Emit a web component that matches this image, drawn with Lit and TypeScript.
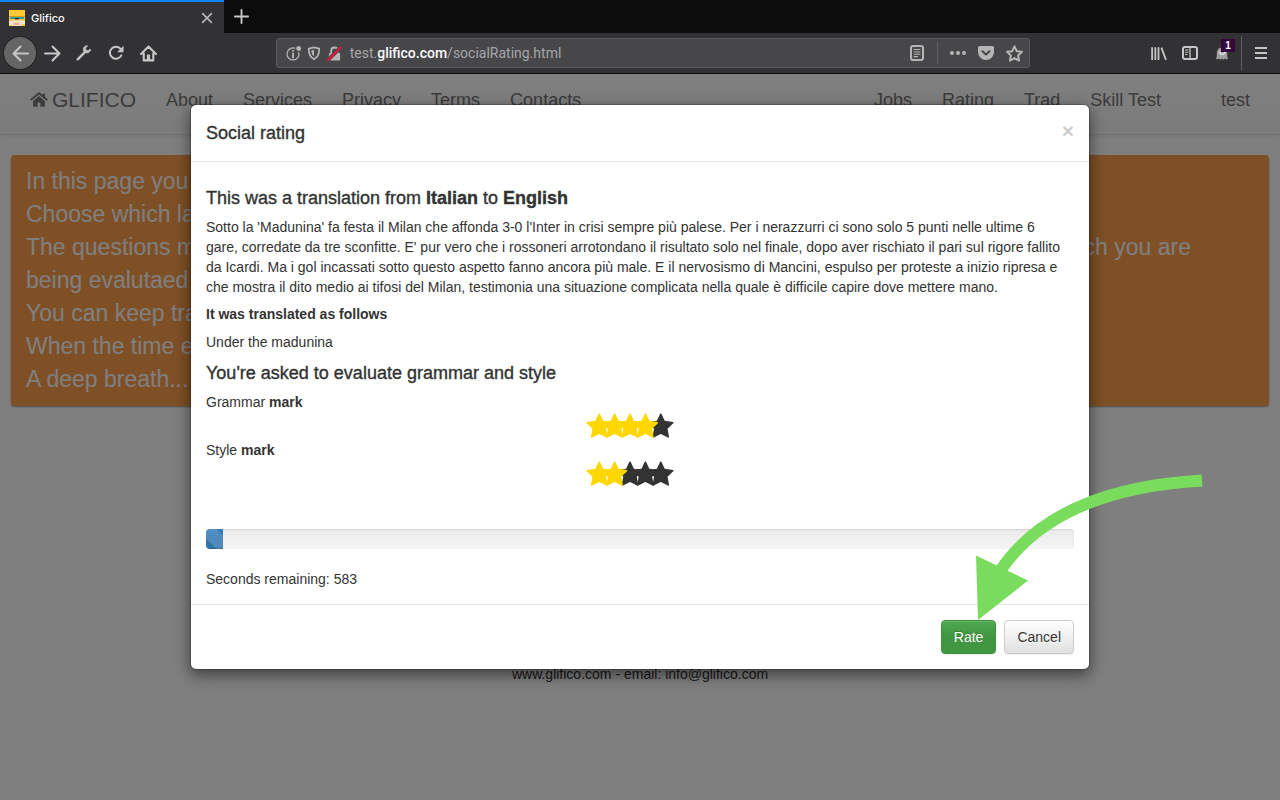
import { LitElement, html, css, svg } from "lit";
import { customElement, property, state } from "lit/decorators.js";

const icon = (size: number, body: unknown) => html`<svg
  width=${size} height=${size} viewBox="0 0 16 16" fill="none" stroke="currentColor"
  stroke-width="2" stroke-linecap="round" stroke-linejoin="round" aria-hidden="true">${body}</svg>`;

const icons = {
  back: svg`<path d="M15 8H1.5M8 1.5 1.5 8 8 14.5"/>`,
  forward: svg`<path d="M1 8h13.5M8 1.5 14.5 8 8 14.5"/>`,
  wrench: svg`<path d="M1.7 14.3 8.4 7.6" stroke-width="2.4"/><path d="M10.2 1.3C7.3 2 6.6 5.3 8 7.1c1.400 2 5.300 2.300 6.700-1.400L14.300 4.700 12 6.300 9.900 5.700 9.600 3.600 11.500 1.700Z" transform="translate(0 -.6)" fill="currentColor" stroke-width=".6"/>`,
  reload: svg`<path d="M13.300 10.400A6 6 0 1 1 12.700 4.100"/><path d="M15.500.8v6.400H9.200Z" fill="currentColor" stroke="none"/>`,
  home: svg`<path d="M1 8.500 8 1.500l7 7M3.500 8v6.500h9V8"/><path d="M6.500 9h3v5.500h-3z" fill="currentColor" stroke="none"/>`,
  library: svg`<path d="M2 2v12M5 2v12M8 2v12M10.700 2.500 15 14" stroke-width="1.700" stroke-linecap="butt"/>`,
  sidebar: svg`<rect x="1" y="2" width="14" height="12" rx="2"/><path d="M8 2v12" stroke-width="1.300"/><path d="M3.500 5h2.500M3.500 7.200h2.500M3.500 9.400h1.500" stroke-width="1"/>`,
  ghost: svg`<path d="M2 13.500C3.500 11 2.500 9 3 6.500 4 1 12 1 13 6.500c.5 2.500-.5 4.500 1 7l-1.500 1-1.500-1-1.500 1.300L8 13.600l-1.500 1.200-1.500-1.300-1.500 1Z" fill="currentColor" stroke="none"/><path d="M5.500 7.200C6.500 10 10 10 11 7.200" stroke="#e8e8e8" stroke-width="1.600"/>`,
  menu: svg`<path d="M2 3h12M2 8h12M2 13h12" stroke-linecap="butt"/>`,
  info: svg`<circle cx="7.500" cy="8.500" r="6.400" stroke-width="1.300"/><path d="M7.500 8v4.200M7.500 5v.2" stroke-width="2"/><circle cx="13.500" cy="2.700" r="3.200" fill="#b5b5b6" stroke="#474749" stroke-width="1.200"/>`,
  shield: svg`<path d="M8 1.500 14 3c0 5.500-1 9.500-6 12C3 12.500 2 8.500 2 3Z"/><path d="M8 4.500c-1 .3-2 .5-3 .6.2 3 1 5.200 3 6.900Z" fill="currentColor" stroke="none"/>`,
  lock: svg`<path d="M4.500 8V5c0-4.500 7-4.500 7 0v3" /><rect x="2" y="7.500" width="12" height="8" rx="1" fill="currentColor" stroke="none"/><path d="M.5 15.500 14.500 1.500" stroke="#474749" stroke-width="4"/><path d="M1 15.200 14.500 1.500" stroke="#f0103c" stroke-width="2"/>`,
  reader: svg`<rect x="2" y="1" width="12" height="14" rx="2"/><path d="M5 4.500h6M5 7h6M5 9.300h6M5 11.600h3.500" stroke-width="1.100"/>`,
  dots: svg`<circle cx="2" cy="8" r="2" fill="currentColor" stroke="none"/><circle cx="8" cy="8" r="2" fill="currentColor" stroke="none"/><circle cx="14" cy="8" r="2" fill="currentColor" stroke="none"/>`,
  pocket: svg`<path d="M1.500 1h13A1.500 1.500 0 0 1 16 2.500V7a8 8 0 0 1-16 0V2.500A1.500 1.500 0 0 1 1.500 1Z" fill="currentColor" stroke="none"/><path d="m4.500 6.200 3.500 3.400 3.500-3.400" stroke="#474749"/>`,
  star: svg`<path d="m8 1.300 2.100 4.500 4.900.6-3.600 3.400.9 4.900L8 12.300l-4.300 2.400.9-4.900L1 6.400l4.900-.6Z" stroke-width="1.900"/>`,
  close: svg`<path d="M3 3l10 10M13 3 3 13" stroke-width="1.800"/>`,
  plus: svg`<path d="M8 1v14M1 8h14"/>`,
  house: svg`<path d="M8 4.500 2.800 8.800v4.700c0 .4.200.6.600.6H6.800v-3.800h2.400v3.800h3.400c.4 0 .6-.2.600-.6V8.800Z" fill="currentColor" stroke="none"/><path d="M.7 8 8 2l7.300 6" stroke-width="1.600" stroke-linecap="butt"/><path d="M11.200 2.300h2v4l-2-1.600z" fill="currentColor" stroke="none"/>`,
};

@customElement("browser-bar")
class BrowserBar extends LitElement {
  static styles = css`
    :host { display: block; background: #0c0c0d; color: #c6c6c7; font-family: Inter, "Liberation Sans", sans-serif; }
    button { border: 0; padding: 0; background: none; color: inherit; display: flex; align-items: center; justify-content: center; }
    svg { display: block; flex: none; }
    .tabs { display: flex; height: 33px; }
    .tab { display: flex; align-items: center; box-sizing: border-box; width: 224px; padding: 0 9px; gap: 6px; background: #323234; border-top: 2px solid #0a84ff; color: #f9f9fa; font-size: 11px; line-height: 16px; font-weight: 500; }
    .title { flex: 1; }
    .tab button { color: #b9b9ba; width: 16px; height: 16px; }
    .add { width: 34px; }
    .tools { display: flex; align-items: center; height: 40px; padding: 0 3px 0 4px; background: #323234; border-bottom: 1px solid #0c0c0d; }
    .tool { width: 32px; height: 32px; }
    .round { border-radius: 50%; background: #656566; box-shadow: 0 0 0 1px #252526; }
    .space { flex: 10; }
    .address { flex: 66; display: flex; align-items: center; box-sizing: border-box; height: 30px; padding: 0 6px 0 9px; gap: 6px; background: #474749; border: 1px solid #5b5b5d; border-radius: 3px; color: #b5b5b6; }
    .url { flex: 1; padding-left: 2px; font-size: 14px; line-height: 20px; color: #a5a5a8; font-family: Roboto, sans-serif; white-space: nowrap; }
    .url b { color: #f9f9fa; font-weight: 500; }
    .rule { width: 1px; height: 22px; background: #606062; }
    .actions { display: flex; align-items: center; gap: 12px; }
    .wall { width: 1px; height: 34px; background: #606062; margin: 0 3px; }
    .ghost { position: relative; color: #a0a0a1; }
    .badge { position: absolute; left: 15px; top: 2px; width: 14px; height: 13px; background: #35063a; color: #fff; font-size: 10px; line-height: 13px; font-weight: 700; }
  `;
  render() {
    return html`
      <div class="tabs">
        <div class="tab">
          <svg width="16" height="16" viewBox="0 0 16 16" aria-hidden="true">
            <path fill="#ffc935" d="M0 0h16v16H0z"/><path fill="#d99a1c" d="M0 6h16v1H0z"/>
            <path fill="#2f9c95" d="M1 7h14v2H1z"/><path fill="#333" d="M6 8h4v1.500H6z"/>
            <path fill="#f4d9b5" d="M3 10h10v6H3z"/><path fill="#eee7d7" d="M0 11h4v4H0zM12 11h4v3h-4z"/>
            <path fill="#f2b08e" d="M5 13h5v2H5z"/>
          </svg>
          <span class="title">Glifico</span>
          <button aria-label="Close tab">${icon(14, icons.close)}</button>
        </div>
        <button class="add" aria-label="New tab">${icon(15, icons.plus)}</button>
      </div>
      <div class="tools">
        <button class="tool round" aria-label="Back">${icon(17, icons.back)}</button>
        <button class="tool" aria-label="Forward">${icon(17, icons.forward)}</button>
        <button class="tool" aria-label="Tools">${icon(16, icons.wrench)}</button>
        <button class="tool" aria-label="Reload">${icon(16, icons.reload)}</button>
        <button class="tool" aria-label="Home">${icon(17, icons.home)}</button>
        <span class="space"></span>
        <div class="address">
          ${icon(15, icons.info)}${icon(14, icons.shield)}${icon(15, icons.lock)}
          <span class="url">test.<b>glifico.com</b>/socialRating.html</span>
          <div class="actions">
            <button aria-label="Reader view">${icon(16, icons.reader)}</button>
            <span class="rule"></span>
            <button aria-label="Page actions">${icon(16, icons.dots)}</button>
            <button aria-label="Save">${icon(16, icons.pocket)}</button>
            <button aria-label="Bookmark">${icon(17, icons.star)}</button>
          </div>
        </div>
        <span class="space"></span>
        <button class="tool" aria-label="Library">${icon(17, icons.library)}</button>
        <button class="tool" aria-label="Sidebar">${icon(16, icons.sidebar)}</button>
        <button class="tool ghost" aria-label="Ghostery">${icon(16, icons.ghost)}<span class="badge">1</span></button>
        <span class="wall"></span>
        <button class="tool" aria-label="Menu">${icon(16, icons.menu)}</button>
      </div>`;
  }
}

@customElement("star-rating")
class StarRating extends LitElement {
  @property() name = "";
  @property({ type: Number }) value = 0;
  static styles = css`
    :host { display: block; }
    .caption { line-height: 20px; }
    .stars { display: flex; justify-content: center; box-sizing: border-box; height: 28px; padding: 1px 20px 0 0; }
    .track { display: grid; grid-template-columns: repeat(5, minmax(0, 1fr)); justify-items: center; width: 77px; direction: rtl; }
    input { appearance: none; margin: 0; width: 26px; height: 25px; background: #333; clip-path: polygon(48% 2%, 52% 2%, 65% 31%, 98% 36%, 99% 40%, 76% 63%, 82% 97%, 79% 99%, 50% 84%, 21% 99%, 18% 97%, 24% 63%, 1% 40%, 2% 36%, 35% 31%); }
    .on { background: #ffd700; }
  `;
  render() {
    return html`
      <div class="caption" id="caption">${this.name} <b>mark</b></div>
      <div class="stars" role="radiogroup" aria-labelledby="caption">
        <div class="track">
          ${[5, 4, 3, 2, 1].map((n) => html`<input type="radio" name="mark" aria-label="${n}"
            class=${n <= this.value ? "on" : ""} .checked=${n === this.value}
            @change=${() => { this.value = n; }}>`)}
        </div>
      </div>`;
  }
}

@customElement("app-root")
class AppRoot extends LitElement {
  @state() seconds = 583;
  @state() progress = 2;
  static styles = css`
    :host { display: flex; flex-direction: column; min-height: 100vh; position: relative; color: #333; background: #fff; font-family: "Liberation Sans", Arial, sans-serif; font-size: 14px; line-height: 20px; }
    h4 { margin: 10px 0 9px; padding-top: 1px; font-size: 18px; line-height: 20px; font-weight: 500; -webkit-text-stroke: 0.02em #333; }
    h5 { margin: 10px 0; font-size: 14px; line-height: 15px; font-weight: 600; }
    p { margin: 0 0 10px; }
    .view { position: relative; flex: 1; }
    .nav { display: flex; justify-content: space-between; height: 60px; padding: 0 15px; background: linear-gradient(#fff, #f8f8f8); border-bottom: 1px solid #e7e7e7; box-shadow: 0 1px 5px rgba(0, 0, 0, 0.08); font-size: 18px; }
    .group { display: flex; }
    .nav a { padding: 16px 15px; color: #777; text-decoration: none; }
    .nav .brand { display: flex; align-items: center; gap: 4px; padding: 0 15px 8px; font-size: 21px; }
    .nav .user { margin-left: 30px; }
    .intro { margin: 20px 11px 0; padding: 10px 15px; border-radius: 4px; background: #ffa04d; box-shadow: 0 1px 2px rgba(0, 0, 0, 0.4); color: #fff; font-size: 23px; line-height: 33px; }
    .split { display: flex; justify-content: space-between; padding-right: 63px; }
    .foot { margin-top: 258px; text-align: center; }
    .shade { position: absolute; inset: 0; padding: 30px 10px; background: rgba(0, 0, 0, 0.5); }
    .modal { box-sizing: border-box; max-width: 900px; margin: 0 auto; background: #fff; background-clip: padding-box; border: 1px solid rgba(0, 0, 0, 0.2); border-radius: 6px; box-shadow: 0 5px 15px rgba(0, 0, 0, 0.5); }
    .head { display: flex; justify-content: space-between; align-items: flex-start; padding: 15px; border-bottom: 1px solid #e5e5e5; }
    .head h4 { margin: 0; line-height: 25px; }
    .close { border: 0; padding: 0; background: none; color: #000; opacity: 0.2; font: bold 21px/21px "Liberation Sans", sans-serif; text-shadow: 0 1px 0 #fff; }
    .body { display: flow-root; padding: 15px; }
    .source { padding-right: 4px; }
    .marks { margin-bottom: 41px; }
    .progress { height: 20px; margin-bottom: 20px; overflow: hidden; border-radius: 4px; background: linear-gradient(#ebebeb, #f5f5f5); box-shadow: inset 0 1px 2px rgba(0, 0, 0, 0.1); }
    .bar { height: 100%; background: linear-gradient(45deg, rgba(255,255,255,.15) 25%, transparent 25%, transparent 50%, rgba(255,255,255,.15) 50%, rgba(255,255,255,.15) 75%, transparent 75%) 0 9px / 40px 40px, linear-gradient(#337ab7, #2f72ab); box-shadow: inset 0 -1px 0 rgba(0, 0, 0, 0.15); }
    .actions { display: flex; justify-content: flex-end; gap: 8px; padding: 15px; border-top: 1px solid #e5e5e5; }
    .btn { padding: 6px 12px; border: 1px solid #ccc; border-radius: 4px; font: 14px/20px "Liberation Sans", sans-serif; color: #333; background: linear-gradient(#fff, #e0e0e0); text-shadow: 0 1px 0 #fff; box-shadow: inset 0 1px 0 rgba(255, 255, 255, 0.15), 0 1px 1px rgba(0, 0, 0, 0.075); }
    .go { color: #fff; border-color: #3e8f3e; background: linear-gradient(#4fa950, #419641 50%, #419641); text-shadow: 0 -1px 0 rgba(0, 0, 0, 0.2); }
    .arrow { position: absolute; left: 970px; top: 470px; pointer-events: none; }
  `;
  render() {
    return html`
      <browser-bar></browser-bar>
      <div class="view">
        <nav class="nav">
          <div class="group">
            <a class="brand" href="#">${icon(18, icons.house)}GLIFICO</a>
            ${["About", "Services", "Privacy", "Terms", "Contacts"].map((t) => html`<a href="#">${t}</a>`)}
          </div>
          <div class="group">
            ${["Jobs", "Rating", "Trad", "Skill Test"].map((t) => html`<a href="#">${t}</a>`)}
            <a class="user" href="#">test</a>
          </div>
        </nav>
        <section class="intro">
          <div>In this page you</div>
          <div>Choose which la</div>
          <div class="split"><span>The questions m</span><span>ch you are</span></div>
          <div>being evalutaed</div>
          <div>You can keep tra</div>
          <div>When the time e</div>
          <div>A deep breath...</div>
        </section>
        <footer class="foot">www.glifico.com - email: info@glifico.com</footer>
        <div class="shade">
          <div class="modal" role="dialog" aria-labelledby="title">
            <div class="head">
              <h4 id="title">Social rating</h4>
              <button class="close" aria-label="Close">×</button>
            </div>
            <div class="body">
              <h4>This was a translation from <b>Italian</b> to <b>English</b></h4>
              <p class="source">Sotto la 'Madunina' fa festa il Milan che affonda 3-0 l'Inter in crisi sempre più palese. Per i nerazzurri ci sono solo 5 punti nelle ultime 6 gare, corredate da tre sconfitte. E' pur vero che i rossoneri arrotondano il risultato solo nel finale, dopo aver rischiato il pari sul rigore fallito da Icardi. Ma i gol incassati sotto questo aspetto fanno ancora più male. E il nervosismo di Mancini, espulso per proteste a inizio ripresa e che mostra il dito medio ai tifosi del Milan, testimonia una situazione complicata nella quale è difficile capire dove mettere mano.</p>
              <h5>It was translated as follows</h5>
              <p>Under the madunina</p>
              <h4>You're asked to evaluate grammar and style</h4>
              <div class="marks">
                <star-rating name="Grammar" .value=${4}></star-rating>
                <star-rating name="Style" .value=${2}></star-rating>
              </div>
              <div class="progress" role="progressbar" aria-valuenow=${this.progress}>
                <div class="bar" style="width:${this.progress}%"></div>
              </div>
              <div>Seconds remaining: ${this.seconds}</div>
            </div>
            <div class="actions">
              <button class="btn go">Rate</button>
              <button class="btn">Cancel</button>
            </div>
          </div>
        </div>
      </div>
      <svg class="arrow" width="240" height="156" viewBox="970 470 240 156" aria-hidden="true">
        <path d="M1202 480.500Q1055 489 1000 571" fill="none" stroke="#79dc5c" stroke-width="12"/>
        <path d="M976 555.500 1028 580.500 978 620Z" fill="#79dc5c"/>
      </svg>`;
  }
}
